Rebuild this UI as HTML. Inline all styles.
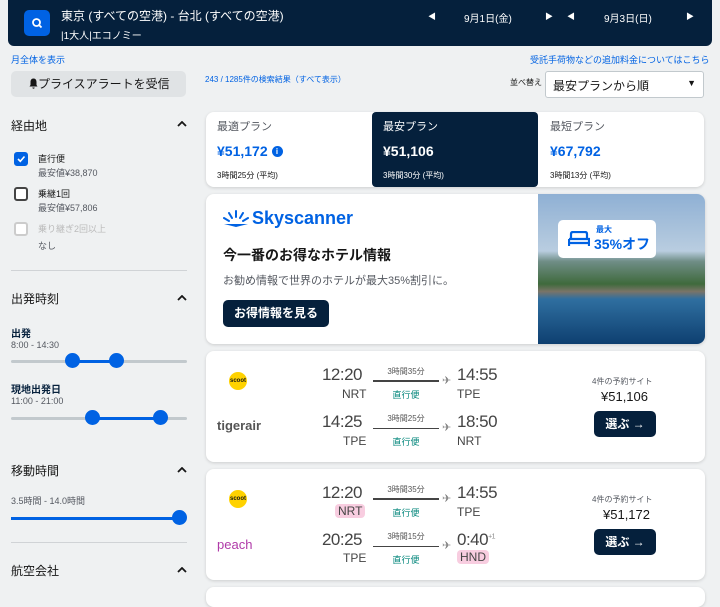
<!DOCTYPE html>
<html><head><meta charset="utf-8"><style>
*{margin:0;padding:0;box-sizing:border-box}
body{width:720px;height:590px;overflow:hidden;background:#eff1f2;font-family:"Liberation Sans","Noto Sans CJK JP",sans-serif;color:#161616;position:relative}
.a{position:absolute;white-space:nowrap}
.hdr{left:8px;top:0;width:704px;height:46px;background:#05203c;border-radius:0 0 6px 6px}
.link{color:#0062e3;font-size:9px}
.sec{font-size:12px;color:#161616}
.chev{width:10px;height:6px}
.cb{width:14px;height:14px;border:2px solid #444;border-radius:3px;background:#fff}
.small{font-size:9px;color:#545860}
.track{height:3px;background:#c2c9cd;border-radius:2px}
.fill{height:3px;background:#0062e3}
.knob{width:15px;height:15px;border-radius:50%;background:#0062e3}
.card{background:#fff;border-radius:8px;box-shadow:0 1px 3px rgba(0,0,0,.15)}
.t{font-size:17px;color:#444;text-align:right;width:60px;letter-spacing:-0.5px}
.ta{font-size:17px;color:#444;letter-spacing:-0.5px}
.code{font-size:12px;color:#444}
.dur{font-size:8px;color:#555;width:66px;text-align:center}
.line{height:2px;background:#444;width:66px}
.direct{font-size:9px;color:#00857a;width:66px;text-align:center}
.pl{font-size:11px;color:#888}
.btn{background:#05203c;color:#fff;font-size:12px;font-weight:bold;border-radius:5px;text-align:center;width:62px;height:26px;line-height:26px}
.pink{background:#f8cde0;border-radius:4px;padding:0 3px}
</style></head><body>
<div class="a hdr"></div>
<div class="a" style="left:24px;top:10px;width:26px;height:26px;background:#0062e3;border-radius:5px"><svg width="26" height="26"><circle cx="12.5" cy="12.5" r="3.5" fill="none" stroke="#fff" stroke-width="1.8"/><path d="M15 15l2.5 2.5" stroke="#fff" stroke-width="1.8"/></svg></div>
<div class="a" style="left:61px;top:7px;color:#fff;font-size:12px">東京 (すべての空港) - 台北 (すべての空港)</div>
<div class="a" style="left:61px;top:27px;color:#fff;font-size:10px">|1大人|エコノミー</div>
<div class="a" style="left:428px;top:11px;color:#fff;font-size:8px">◀</div>
<div class="a" style="left:464px;top:10px;color:#fff;font-size:10px">9月1日(金)</div>
<div class="a" style="left:545px;top:11px;color:#fff;font-size:8px">▶</div>
<div class="a" style="left:567px;top:11px;color:#fff;font-size:8px">◀</div>
<div class="a" style="left:604px;top:10px;color:#fff;font-size:10px">9月3日(日)</div>
<div class="a" style="left:686px;top:11px;color:#fff;font-size:8px">▶</div>

<div class="a link" style="left:11px;top:53px">月全体を表示</div>
<div class="a link" style="left:530px;top:53px">受託手荷物などの追加料金についてはこちら</div>
<div class="a" style="left:11px;top:71px;width:175px;height:26px;background:#e0e3e5;border-radius:5px;font-size:12px;line-height:26px;padding-left:18px"><svg width="9" height="11" style="vertical-align:-1px"><path d="M4.5 0.5C2.3 0.5 1.5 2.3 1.5 4v3L0.5 8.5h8L7.5 7V4C7.5 2.3 6.7 0.5 4.5 0.5z M3.3 9.5h2.4a1.2 1.2 0 0 1-2.4 0z" fill="#161616"/></svg>プライスアラートを受信</div>
<div class="a link" style="left:205px;top:74px;font-size:8px">243 / 1285件の検索結果（すべて表示）</div>
<div class="a" style="left:510px;top:77px;font-size:8px">並べ替え</div>
<div class="a" style="left:545px;top:71px;width:159px;height:27px;background:#fff;border:1px solid #c2c9cd;border-radius:3px;font-size:12px;padding:5px 7px">最安プランから順<span style="position:absolute;right:7px;top:6px;font-size:9px">▼</span></div>

<!-- sidebar -->
<div class="a sec" style="left:11px;top:117px">経由地</div><svg class="a chev" style="left:177px;top:121px"><path d="M1 5l4-4 4 4" fill="none" stroke="#161616" stroke-width="1.8"/></svg>
<div class="a cb" style="left:14px;top:152px;background:#0062e3;border-color:#0062e3"><svg width="10" height="10" style="position:absolute;left:0;top:0"><path d="M2 5l2.3 2.3L8.5 2.5" fill="none" stroke="#fff" stroke-width="1.6"/></svg></div>
<div class="a" style="left:38px;top:152px;font-size:9px">直行便</div>
<div class="a small" style="left:38px;top:166px">最安値¥38,870</div>
<div class="a cb" style="left:14px;top:187px"></div>
<div class="a" style="left:38px;top:187px;font-size:9px">乗継1回</div>
<div class="a small" style="left:38px;top:201px">最安値¥57,806</div>
<div class="a cb" style="left:14px;top:222px;border-color:#ccc"></div>
<div class="a" style="left:38px;top:222px;font-size:9px;color:#bbb">乗り継ぎ2回以上</div>
<div class="a small" style="left:38px;top:239px">なし</div>
<div class="a" style="left:11px;top:270px;width:176px;height:1px;background:#d0d3d6"></div>
<div class="a sec" style="left:11px;top:290px">出発時刻</div><svg class="a chev" style="left:177px;top:295px"><path d="M1 5l4-4 4 4" fill="none" stroke="#161616" stroke-width="1.8"/></svg>
<div class="a" style="left:11px;top:325px;font-size:10px;font-weight:bold;color:#05203c">出発</div>
<div class="a small" style="left:11px;top:340px">8:00 - 14:30</div>
<div class="a track" style="left:11px;top:360px;width:176px"></div>
<div class="a fill" style="left:72px;top:360px;width:44px"></div>
<div class="a knob" style="left:65px;top:353px"></div><div class="a knob" style="left:109px;top:353px"></div>
<div class="a" style="left:11px;top:381px;font-size:10px;font-weight:bold;color:#05203c">現地出発日</div>
<div class="a small" style="left:11px;top:396px">11:00 - 21:00</div>
<div class="a track" style="left:11px;top:417px;width:176px"></div>
<div class="a fill" style="left:93px;top:417px;width:68px"></div>
<div class="a knob" style="left:85px;top:410px"></div><div class="a knob" style="left:153px;top:410px"></div>
<div class="a sec" style="left:11px;top:462px">移動時間</div><svg class="a chev" style="left:177px;top:467px"><path d="M1 5l4-4 4 4" fill="none" stroke="#161616" stroke-width="1.8"/></svg>
<div class="a small" style="left:11px;top:494px">3.5時間 - 14.0時間</div>
<div class="a fill" style="left:11px;top:517px;width:170px"></div>
<div class="a knob" style="left:172px;top:510px"></div>
<div class="a" style="left:11px;top:542px;width:176px;height:1px;background:#d0d3d6"></div>
<div class="a sec" style="left:11px;top:562px">航空会社</div><svg class="a chev" style="left:177px;top:567px"><path d="M1 5l4-4 4 4" fill="none" stroke="#161616" stroke-width="1.8"/></svg>

<!-- tabs -->
<div class="a card" style="left:206px;top:112px;width:498px;height:75px"></div>
<div class="a" style="left:372px;top:112px;width:166px;height:75px;background:#05203c;border-radius:4px"></div>
<div class="a" style="left:217px;top:118px;font-size:11px;color:#545860">最適プラン</div>
<div class="a" style="left:217px;top:143px;font-size:14px;font-weight:bold;color:#0062e3">¥51,172 <span style="display:inline-block;width:11px;height:11px;border-radius:50%;background:#0062e3;color:#fff;font-size:8px;text-align:center;line-height:11px;vertical-align:2px">i</span></div>
<div class="a" style="left:217px;top:170px;font-size:8px">3時間25分 (平均)</div>
<div class="a" style="left:383px;top:118px;font-size:11px;color:#fff">最安プラン</div>
<div class="a" style="left:383px;top:143px;font-size:14px;font-weight:bold;color:#fff">¥51,106</div>
<div class="a" style="left:383px;top:170px;font-size:8px;color:#fff">3時間30分 (平均)</div>
<div class="a" style="left:550px;top:118px;font-size:11px;color:#545860">最短プラン</div>
<div class="a" style="left:550px;top:143px;font-size:14px;font-weight:bold;color:#0062e3">¥67,792</div>
<div class="a" style="left:550px;top:170px;font-size:8px">3時間13分 (平均)</div>

<!-- ad -->
<div class="a card" style="left:206px;top:194px;width:499px;height:150px;overflow:hidden">
<div class="a" style="left:332px;top:0;width:167px;height:150px;background:linear-gradient(#8fb0d4 0%,#b9cde0 38%,#6f8d86 45%,#3f6a3c 60%,#7a7468 65%,#2f6fa0 70%,#0e3f70 100%)"></div>
<div class="a" style="left:352px;top:26px;width:98px;height:38px;background:#fff;border-radius:5px"></div>
<svg class="a" style="left:362px;top:37px" width="22" height="16"><path d="M3 7V3q0-2 2-2h12q2 0 2 2v4M1 8h20v7M1 8v7M1 12h20" fill="none" stroke="#0062e3" stroke-width="2.2"/></svg>
<div class="a" style="left:390px;top:30px;color:#0062e3;font-size:8px;font-weight:bold">最大</div>
<div class="a" style="left:388px;top:40px;color:#0062e3;font-size:14px;font-weight:bold">35%オフ</div>
</div>
<svg class="a" style="left:223px;top:210px" width="26" height="18"><g stroke="#0062e3" stroke-width="2" stroke-linecap="round"><path d="M13 1v6M6 3l3 5M20 3l-3 5M1 8l5 3M25 8l-5 3"/></g><path d="M1 14h24l-12 3z" fill="#0062e3"/></svg>
<div class="a" style="left:252px;top:208px;color:#0062e3;font-size:18px;font-weight:bold">Skyscanner</div>
<div class="a" style="left:223px;top:245px;font-size:14px;font-weight:bold">今一番のお得なホテル情報</div>
<div class="a" style="left:223px;top:272px;font-size:11px;color:#545860">お勧め情報で世界のホテルが最大35%割引に。</div>
<div class="a" style="left:223px;top:300px;width:106px;height:27px;background:#05203c;border-radius:5px;color:#fff;font-size:12px;font-weight:bold;text-align:center;line-height:27px">お得情報を見る</div>

<!-- card 1 -->
<div class="a card" style="left:206px;top:351px;width:499px;height:111px"></div>
<div class="a" style="left:229px;top:372px;width:18px;height:18px;border-radius:50%;background:#ffd200;font-size:6px;font-weight:bold;text-align:center;line-height:18px">scoot</div>
<div class="a" style="left:217px;top:418px;font-size:13px;font-weight:bold;color:#555">tigerair</div>
<div class="a t" style="left:302px;top:365px">12:20</div><div class="a code" style="left:342px;top:387px">NRT</div>
<div class="a dur" style="left:373px;top:366px">3時間35分</div><div class="a line" style="left:373px;top:380px"></div><div class="a pl" style="left:442px;top:374px">✈</div>
<div class="a direct" style="left:373px;top:388px">直行便</div>
<div class="a ta" style="left:457px;top:365px">14:55</div><div class="a code" style="left:457px;top:387px">TPE</div>
<div class="a t" style="left:302px;top:412px">14:25</div><div class="a code" style="left:343px;top:434px">TPE</div>
<div class="a dur" style="left:373px;top:413px">3時間25分</div><div class="a line" style="left:373px;top:428px;height:1px"></div><div class="a pl" style="left:442px;top:421px">✈</div>
<div class="a direct" style="left:373px;top:435px">直行便</div>
<div class="a ta" style="left:457px;top:412px">18:50</div><div class="a code" style="left:457px;top:434px">NRT</div>
<div class="a" style="left:592px;top:376px;font-size:8px;color:#545860">4件の予約サイト</div>
<div class="a" style="left:601px;top:389px;font-size:13px">¥51,106</div>
<div class="a btn" style="left:594px;top:411px">選ぶ →</div>

<!-- card 2 -->
<div class="a card" style="left:206px;top:469px;width:499px;height:111px"></div>
<div class="a" style="left:229px;top:490px;width:18px;height:18px;border-radius:50%;background:#ffd200;font-size:6px;font-weight:bold;text-align:center;line-height:18px">scoot</div>
<div class="a" style="left:217px;top:537px;font-size:13px;color:#b03aa8">peach</div>
<div class="a t" style="left:302px;top:483px">12:20</div><div class="a code pink" style="left:335px;top:504px">NRT</div>
<div class="a dur" style="left:373px;top:484px">3時間35分</div><div class="a line" style="left:373px;top:498px"></div><div class="a pl" style="left:442px;top:492px">✈</div>
<div class="a direct" style="left:373px;top:506px">直行便</div>
<div class="a ta" style="left:457px;top:483px">14:55</div><div class="a code" style="left:457px;top:505px">TPE</div>
<div class="a t" style="left:302px;top:530px">20:25</div><div class="a code" style="left:343px;top:551px">TPE</div>
<div class="a dur" style="left:373px;top:531px">3時間15分</div><div class="a line" style="left:373px;top:546px;height:1px"></div><div class="a pl" style="left:442px;top:539px">✈</div>
<div class="a direct" style="left:373px;top:553px">直行便</div>
<div class="a ta" style="left:457px;top:530px">0:40<sup style="font-size:7px;color:#888">+1</sup></div><div class="a code pink" style="left:457px;top:550px">HND</div>
<div class="a" style="left:592px;top:494px;font-size:8px;color:#545860">4件の予約サイト</div>
<div class="a" style="left:603px;top:507px;font-size:13px">¥51,172</div>
<div class="a btn" style="left:594px;top:529px">選ぶ →</div>

<div class="a card" style="left:206px;top:587px;width:499px;height:20px"></div>
</body></html>
